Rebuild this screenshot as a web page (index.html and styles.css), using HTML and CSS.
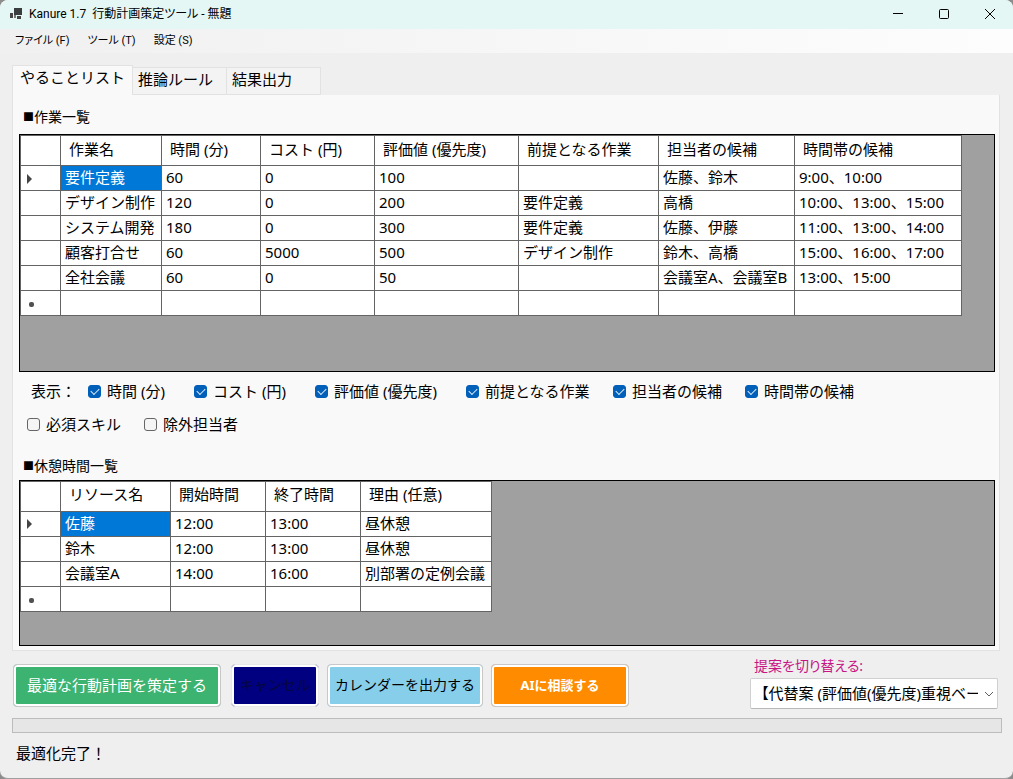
FILE: index.html
```html
<!DOCTYPE html>
<html lang="ja">
<head>
    <meta charset="UTF-8">
    <meta name="viewport" content="width=device-width, initial-scale=1.0">
    <title>Kanure 1.7 行動計画策定ツール - 無題</title>
    <link rel="stylesheet" href="styles.css">
</head>
<body>
<div class="window">

    <!-- Title bar -->
    <header class="title-bar">
        <svg class="app-icon" width="12" height="12" viewBox="0 0 12 12">
            <rect x="0" y="5" width="3" height="5" fill="#444"/>
            <rect x="4" y="0" width="8" height="7" fill="#3a3d3d"/>
            <rect x="4" y="7" width="2" height="3" fill="#777"/>
            <rect x="7" y="8" width="4" height="3" fill="#444"/>
        </svg>
        <h1 class="title">Kanure 1.7&nbsp; 行動計画策定ツール - 無題</h1>
        <div class="window-buttons">
            <button type="button" aria-label="最小化"><svg width="12" height="12" viewBox="0 0 12 12"><path d="M1 5.5h10"/></svg></button>
            <button type="button" aria-label="最大化"><svg width="12" height="12" viewBox="0 0 12 12"><rect x="1.5" y="1.5" width="9" height="9" rx="1"/></svg></button>
            <button type="button" aria-label="閉じる"><svg width="12" height="12" viewBox="0 0 12 12"><path d="M1 1l10 10M11 1L1 11"/></svg></button>
        </div>
    </header>

    <nav class="menu-bar">
        <button type="button">ファイル (F)</button>
        <button type="button">ツール (T)</button>
        <button type="button">設定 (S)</button>
    </nav>

    <main class="content">
        <div class="tabs" role="tablist">
            <button type="button" class="tab active" role="tab" aria-selected="true">やることリスト</button>
            <button type="button" class="tab" role="tab" aria-selected="false">推論ルール</button>
            <button type="button" class="tab" role="tab" aria-selected="false">結果出力</button>
        </div>

        <section class="tab-page">
            <h2 class="section-title"><span class="mark">■</span>作業一覧</h2>
            <div class="grid-box task-box">
                <table class="data-grid">
                    <colgroup>
                        <col class="w-head"><col class="w-task"><col class="w-time"><col class="w-cost"><col class="w-score"><col class="w-prior"><col class="w-member"><col class="w-slot">
                    </colgroup>
                    <thead>
                        <tr><th></th><th>作業名</th><th>時間 (分)</th><th>コスト (円)</th><th>評価値 (優先度)</th><th>前提となる作業</th><th>担当者の候補</th><th>時間帯の候補</th></tr>
                    </thead>
                    <tbody>
                        <tr><td><span class="row-arrow"></span></td><td class="selected">要件定義</td><td>60</td><td>0</td><td>100</td><td></td><td>佐藤、鈴木</td><td>9:00、10:00</td></tr>
                        <tr><td></td><td>デザイン制作</td><td>120</td><td>0</td><td>200</td><td>要件定義</td><td>高橋</td><td>10:00、13:00、15:00</td></tr>
                        <tr><td></td><td>システム開発</td><td>180</td><td>0</td><td>300</td><td>要件定義</td><td>佐藤、伊藤</td><td>11:00、13:00、14:00</td></tr>
                        <tr><td></td><td>顧客打合せ</td><td>60</td><td>5000</td><td>500</td><td>デザイン制作</td><td>鈴木、高橋</td><td>15:00、16:00、17:00</td></tr>
                        <tr><td></td><td>全社会議</td><td>60</td><td>0</td><td>50</td><td></td><td>会議室A、会議室B</td><td>13:00、15:00</td></tr>
                        <tr><td><span class="row-new"></span></td><td></td><td></td><td></td><td></td><td></td><td></td><td></td></tr>
                    </tbody>
                </table>
            </div>

            <!-- Column visibility -->
            <div class="filters">
                <div class="filter-row">
                    <span class="filter-label">表示：</span>
                    <label class="f-time"><input type="checkbox" checked>時間 (分)</label>
                    <label class="f-cost"><input type="checkbox" checked>コスト (円)</label>
                    <label class="f-score"><input type="checkbox" checked>評価値 (優先度)</label>
                    <label class="f-prior"><input type="checkbox" checked>前提となる作業</label>
                    <label class="f-member"><input type="checkbox" checked>担当者の候補</label>
                    <label><input type="checkbox" checked>時間帯の候補</label>
                </div>
                <div class="filter-row">
                    <label class="f-skill"><input type="checkbox">必須スキル</label>
                    <label><input type="checkbox">除外担当者</label>
                </div>
            </div>

            <h2 class="section-title"><span class="mark">■</span>休憩時間一覧</h2>
            <div class="grid-box rest-box">
                <table class="data-grid">
                    <colgroup>
                        <col class="w-head"><col class="w-resource"><col class="w-clock"><col class="w-clock"><col class="w-reason">
                    </colgroup>
                    <thead>
                        <tr><th></th><th>リソース名</th><th>開始時間</th><th>終了時間</th><th>理由 (任意)</th></tr>
                    </thead>
                    <tbody>
                        <tr><td><span class="row-arrow"></span></td><td class="selected">佐藤</td><td>12:00</td><td>13:00</td><td>昼休憩</td></tr>
                        <tr><td></td><td>鈴木</td><td>12:00</td><td>13:00</td><td>昼休憩</td></tr>
                        <tr><td></td><td>会議室A</td><td>14:00</td><td>16:00</td><td>別部署の定例会議</td></tr>
                        <tr><td><span class="row-new"></span></td><td></td><td></td><td></td><td></td></tr>
                    </tbody>
                </table>
            </div>
        </section>

        <!-- Actions -->
        <div class="actions">
            <button type="button" class="action plan">最適な行動計画を策定する</button>
            <button type="button" class="action cancel" disabled>キャンセル</button>
            <button type="button" class="action calendar">カレンダーを出力する</button>
            <button type="button" class="action consult">AIに相談する</button>
            <div class="switcher">
                <label for="proposal">提案を切り替える:</label>
                <div class="select-box">
                    <select id="proposal">
                        <option>【代替案 (評価値(優先度)重視ベー</option>
                    </select>
                    <svg class="chevron" width="10" height="6" viewBox="0 0 10 6"><path d="M1 1l4 4 4-4"/></svg>
                </div>
            </div>
        </div>

        <progress class="progress" value="0" max="100" aria-label="進捗"></progress>
        <p class="status">最適化完了！</p>
    </main>
</div>
</body>
</html>
```
FILE: styles.css
```css
* {
    box-sizing: border-box;
}

body {
    margin: 0;
    background-color: #8c8c8c;
    color: #000;
    font-family: "Noto Sans", "Noto Sans CJK JP", sans-serif;
    font-size: 15px;
    line-height: 20px;
}

button, select {
    font-family: inherit;
    font-size: inherit;
    line-height: inherit;
    color: inherit;
}

.window {
    display: flex;
    flex-direction: column;
    min-height: 100vh;
    background-color: #efefef;
    border-bottom: 1px solid #a0a0a0;
    border-radius: 8px;
    overflow: hidden;
}

/* Title bar */
.title-bar {
    display: flex;
    align-items: center;
    height: 29px;
    padding: 0 0 2px 10px;
    background-color: #e4f7f5;
}

.title {
    flex: 1;
    margin: 0 0 0 7px;
    font-family: Roboto, "Noto Sans CJK JP", sans-serif;
    font-size: 12px;
    font-weight: normal;
    line-height: 20px;
    font-feature-settings: "palt";
}

.window-buttons {
    display: flex;
}

.window-buttons button {
    display: flex;
    align-items: center;
    justify-content: center;
    width: 46px;
    height: 27px;
    padding: 0;
    border: 0;
    background: none;
}

.window-buttons svg {
    fill: none;
    stroke: #000;
}

/* Menu */
.menu-bar {
    display: flex;
    gap: 18px;
    height: 24px;
    padding-left: 15px;
    background: linear-gradient(to right, #f0f0f0, #fdfdfd);
}

.menu-bar button {
    padding: 0;
    border: 0;
    background: none;
    font-family: Roboto, "Noto Sans CJK JP", sans-serif;
    font-size: 11px;
    font-feature-settings: "palt";
}

.content {
    display: flex;
    flex: 1;
    flex-direction: column;
    padding: 12px 11px 15px 12px;
}

/* Tabs */
.tabs {
    display: flex;
    align-items: flex-end;
    height: 30px;
}

.tab {
    width: 94px;
    height: 28px;
    padding: 0 0 4px 5px;
    border: 1px solid #e2e2e2;
    border-left: 0;
    background-color: #f3f3f3;
    text-align: left;
    white-space: nowrap;
}

.tab.active {
    width: 121px;
    height: 30px;
    padding: 0 0 8px 7px;
    border-left: 1px solid #e2e2e2;
    border-bottom: 0;
    background-color: #f9f9f9;
}

.tab-page {
    display: flex;
    flex: 1;
    flex-direction: column;
    margin-right: 2px;
    padding: 12px 4px 4px 6px;
    border: 1px solid #e2e2e2;
    border-top: 0;
    background-color: #f9f9f9;
}

.section-title {
    display: flex;
    margin: 0 0 4px 4px;
    font-size: 14px;
    font-weight: normal;
    line-height: 20px;
}

.mark {
    font-size: 11px;
}

/* Data grids */
.grid-box {
    border: 1px solid #000;
    background-color: #a0a0a0;
    overflow: auto;
}

.task-box {
    flex: 238 0 0;
    min-height: 184px;
    margin-top: 3px;
}

.rest-box {
    flex: 166 0 0;
    min-height: 134px;
}

.data-grid {
    width: min-content;
    table-layout: fixed;
    border-collapse: collapse;
    background-color: #fff;
}

.data-grid th,
.data-grid td {
    height: 25px;
    padding: 0 0 2px 4px;
    border: 1px solid #646464;
    font-weight: normal;
    text-align: left;
    white-space: nowrap;
}

.data-grid th {
    height: 30px;
    padding: 0 0 4px 8px;
}

.data-grid .selected {
    background-color: #0078d7;
    color: #fff;
}

.w-head { width: 40px; }
.w-task { width: 101px; }
.w-time { width: 99px; }
.w-cost { width: 114px; }
.w-score { width: 144px; }
.w-prior { width: 140px; }
.w-member { width: 136px; }
.w-slot { width: 167px; }
.w-resource { width: 110px; }
.w-clock { width: 95px; }
.w-reason { width: 131px; }

.row-arrow {
    display: block;
    width: 0;
    margin: 3px 0 0 2px;
    border: solid transparent;
    border-width: 5px 0 5px 5px;
    border-left-color: #444;
}

.row-new {
    display: block;
    width: 5px;
    height: 5px;
    margin: 5px 0 0 4px;
    border-radius: 2px;
    background-color: #505050;
}

/* Check boxes */
.filters {
    padding: 9px 0 22px 8px;
}

.filter-row {
    display: flex;
    flex-wrap: wrap;
}

.filter-row + .filter-row {
    margin-top: 13px;
}

.filter-label {
    width: 61px;
    padding-left: 4px;
}

.filter-row label {
    display: flex;
    align-items: center;
    gap: 6px;
    white-space: nowrap;
}

.f-time { width: 106px; }
.f-cost { width: 121px; }
.f-score { width: 151px; }
.f-prior { width: 147px; }
.f-member { width: 132px; }
.f-skill { width: 117px; }

.filter-row input {
    position: relative;
    width: 13px;
    height: 13px;
    margin: 2px 0 0;
    appearance: none;
    border: 1px solid #666;
    border-radius: 3px;
    background-color: #f5f5f5;
}

.filter-row input:checked {
    border-color: #005fb8;
    background-color: #005fb8;
}

.filter-row input:checked::before {
    content: "";
    position: absolute;
    top: 2px;
    left: 2px;
    width: 7px;
    height: 4px;
    border: solid #dcebf8;
    border-width: 0 0 1px 1px;
    transform: rotate(-45deg);
}

/* Bottom buttons */
.actions {
    display: flex;
    align-items: flex-start;
    margin-top: 5px;
    padding-right: 4px;
}

.action {
    height: 43px;
    margin-top: 8px;
    padding: 0 0 2px;
    border: 1px solid #c8c8c8;
    border-radius: 4px;
    box-shadow: inset 0 0 0 2px #fff;
    white-space: nowrap;
}

.plan {
    width: 208px;
    margin-left: 1px;
    background-color: #3cb371;
    color: #fff;
}

.cancel {
    width: 88px;
    margin-left: 10px;
    border-color: #e8e8e8;
    background-color: #000080;
    color: #06063f;
    font-size: 14px;
}

.calendar {
    width: 156px;
    margin-left: 8px;
    background-color: #87ceeb;
    font-size: 14px;
}

.consult {
    width: 138px;
    margin-left: 8px;
    background-color: #ff8c00;
    color: #fff;
    font-size: 13px;
    font-weight: bold;
}

.switcher {
    width: 248px;
    margin-left: auto;
}

.switcher label {
    display: block;
    padding-left: 4px;
    color: #c71585;
    font-size: 14px;
    font-feature-settings: "palt";
}

.select-box {
    position: relative;
    margin-top: 2px;
}

.select-box select {
    width: 100%;
    height: 31px;
    padding: 0 19px 2px 10px;
    appearance: none;
    border: 1px solid #d0d0d0;
    border-bottom-color: #b8b8b8;
    border-radius: 2px;
    background-color: #fff;
    font-feature-settings: "palt";
}

.chevron {
    position: absolute;
    top: 13px;
    right: 4px;
    fill: none;
    stroke: #606060;
    pointer-events: none;
}

.progress {
    display: block;
    width: 100%;
    height: 15px;
    margin-top: 9px;
    appearance: none;
    border: 1px solid #bcbcbc;
    background-color: #e6e6e6;
}

.progress::-webkit-progress-bar {
    background-color: #e6e6e6;
}

.status {
    margin: 10px 0 0 4px;
}
```
